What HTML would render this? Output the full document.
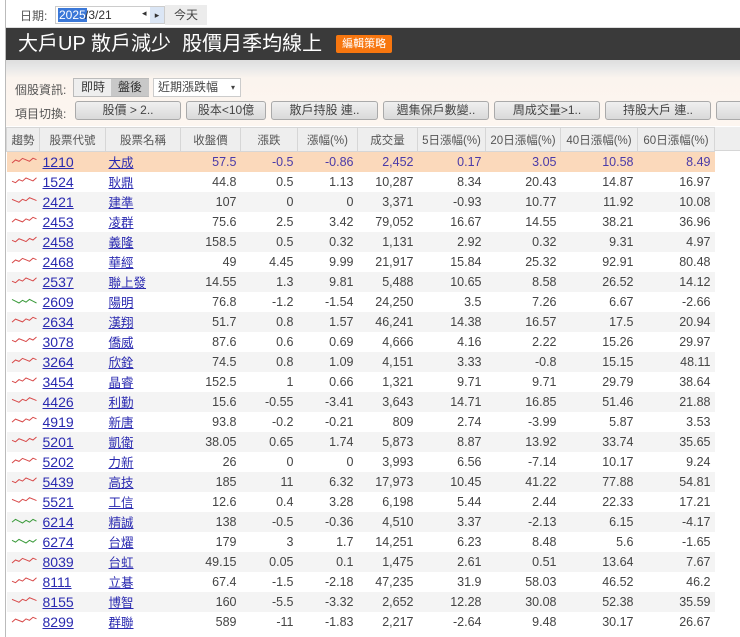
<!DOCTYPE html>
<html><head><meta charset="utf-8"><style>
*{margin:0;padding:0;box-sizing:border-box}
body{width:740px;height:637px;overflow:hidden;background:#fff;font-family:"Liberation Sans","Noto Sans CJK TC",sans-serif;font-size:12px;color:#333;position:relative}
.abs{position:absolute}
.vl{left:5px;top:0;width:1px;height:637px;background:#bbb}
.top{left:6px;top:0;width:734px;height:28px;background:#fff;border-bottom:1px solid #ddd}
.dark{left:6px;top:28px;width:734px;height:32px;background:#3a3a3a;color:#fff;font-size:20px;line-height:32px;padding-left:12px}
.orange{display:inline-block;background:#f7760f;color:#fff;font-size:11px;line-height:18px;padding:0 6px;margin-left:14px;vertical-align:3px;border-radius:2px}
.band{left:6px;top:60px;width:734px;height:66px;background:linear-gradient(#dedede 0,#e8e8e8 8px,#fbf4ee 18px,#fdf6f0 100%)}
.btn{position:absolute;top:101px;height:19px;border:1px solid #aaa;border-radius:3px;background:linear-gradient(#f0f0f0,#d9d9d9);text-align:center;line-height:17px;font-size:12px;color:#444}
table{position:absolute;left:6px;top:127px;border-collapse:collapse;table-layout:fixed}
td,th{height:20px;padding:0 4px;white-space:nowrap;overflow:hidden}
th{height:24px;font-weight:normal;color:#555;background:#eee;border:1px solid #d6d6d6;font-size:11.5px;padding:0 2px}
td{text-align:right;font-size:12.5px;color:#444}
tr:nth-child(odd) td{background:#f4f4f4}
tr.hl td{background:#fbd9bb;color:#4a3aa8}
td.c,td.n{text-align:left;padding-left:3px}
td.c{font-size:14px}
td a{color:#2a2ab0;text-decoration:underline}
td.sp{padding:0 0 0 2px}
</style></head><body>
<div class="abs vl"></div>
<div class="abs top">
 <span class="abs" style="left:14px;top:7px;color:#555">日期:</span>
 <div class="abs" style="left:49px;top:6px;width:110px;height:18px;border:1px solid #ccc;background:#fff">
  <span class="abs" style="left:2px;top:1px;background:#3b78d8;color:#fff;padding:0 1px">2025</span><span class="abs" style="left:29px;top:1px;color:#333">/3/21</span>
  <span class="abs" style="left:86px;top:1px;font-size:9px">◂</span><span class="abs" style="left:94px;top:0;width:14px;height:16px;background:#dbe6f5;font-size:9px;text-align:center;line-height:16px">▸</span>
 </div>
 <div class="abs" style="left:159px;top:5px;width:42px;height:20px;background:#ececec;text-align:center;line-height:20px;color:#444">今天</div>
</div>
<div class="abs dark">大戶UP 散戶減少&nbsp; 股價月季均線上<span class="orange">編輯策略</span></div>
<div class="abs band"></div>
<span class="abs" style="left:15px;top:81px;color:#555">個股資訊:</span>
<div class="abs" style="left:73px;top:78px;width:76px;height:19px;border:1px solid #bbb;background:#eee;font-size:12px;line-height:17px"><span style="padding-left:7px">即時</span><span style="position:absolute;left:37px;top:0;width:38px;height:17px;background:#c8c8c8;text-align:center">盤後</span></div>
<div class="abs" style="left:153px;top:78px;width:88px;height:19px;border:1px solid #ccc;background:#fff;line-height:17px;padding-left:4px;color:#444">近期漲跌幅 <span style="position:absolute;right:5px;font-size:8px">▾</span></div>
<span class="abs" style="left:15px;top:105px;color:#555">項目切換:</span>
<div class="btn" style="left:75px;width:106px">股價 &gt; 2..</div>
<div class="btn" style="left:186px;width:80px">股本&lt;10億</div>
<div class="btn" style="left:271px;width:107px">散戶持股 連..</div>
<div class="btn" style="left:383px;width:106px">週集保戶數變..</div>
<div class="btn" style="left:494px;width:106px">周成交量&gt;1..</div>
<div class="btn" style="left:605px;width:106px">持股大戶 連..</div>
<div class="btn" style="left:716px;width:40px"></div>
<div class="abs" style="left:714px;top:127px;width:26px;height:24px;background:#eee;border-bottom:1px solid #d6d6d6"></div>
<table>
<colgroup><col style="width:33px"><col style="width:66px"><col style="width:75px"><col style="width:60px"><col style="width:57px"><col style="width:60px"><col style="width:60px"><col style="width:68px"><col style="width:75px"><col style="width:77px"><col style="width:77px"></colgroup>
<tr><th>趨勢</th><th>股票代號</th><th>股票名稱</th><th>收盤價</th><th>漲跌</th><th>漲幅(%)</th><th>成交量</th><th>5日漲幅(%)</th><th>20日漲幅(%)</th><th>40日漲幅(%)</th><th>60日漲幅(%)</th></tr>
</table>
<script>
var d=[
["1210","大成","57.5","-0.5","-0.86","2,452","0.17","3.05","10.58","8.49"],
["1524","耿鼎","44.8","0.5","1.13","10,287","8.34","20.43","14.87","16.97"],
["2421","建準","107","0","0","3,371","-0.93","10.77","11.92","10.08"],
["2453","凌群","75.6","2.5","3.42","79,052","16.67","14.55","38.21","36.96"],
["2458","義隆","158.5","0.5","0.32","1,131","2.92","0.32","9.31","4.97"],
["2468","華經","49","4.45","9.99","21,917","15.84","25.32","92.91","80.48"],
["2537","聯上發","14.55","1.3","9.81","5,488","10.65","8.58","26.52","14.12"],
["2609","陽明","76.8","-1.2","-1.54","24,250","3.5","7.26","6.67","-2.66"],
["2634","漢翔","51.7","0.8","1.57","46,241","14.38","16.57","17.5","20.94"],
["3078","僑威","87.6","0.6","0.69","4,666","4.16","2.22","15.26","29.97"],
["3264","欣銓","74.5","0.8","1.09","4,151","3.33","-0.8","15.15","48.11"],
["3454","晶睿","152.5","1","0.66","1,321","9.71","9.71","29.79","38.64"],
["4426","利勤","15.6","-0.55","-3.41","3,643","14.71","16.85","51.46","21.88"],
["4919","新唐","93.8","-0.2","-0.21","809","2.74","-3.99","5.87","3.53"],
["5201","凱衛","38.05","0.65","1.74","5,873","8.87","13.92","33.74","35.65"],
["5202","力新","26","0","0","3,993","6.56","-7.14","10.17","9.24"],
["5439","高技","185","11","6.32","17,973","10.45","41.22","77.88","54.81"],
["5521","工信","12.6","0.4","3.28","6,198","5.44","2.44","22.33","17.21"],
["6214","精誠","138","-0.5","-0.36","4,510","3.37","-2.13","6.15","-4.17"],
["6274","台燿","179","3","1.7","14,251","6.23","8.48","5.6","-1.65"],
["8039","台虹","49.15","0.05","0.1","1,475","2.61","0.51","13.64","7.67"],
["8111","立碁","67.4","-1.5","-2.18","47,235","31.9","58.03","46.52","46.2"],
["8155","博智","160","-5.5","-3.32","2,652","12.28","30.08","52.38","35.59"],
["8299","群聯","589","-11","-1.83","2,217","-2.64","9.48","30.17","26.67"]];
var g={"2609":1,"6214":1,"6274":1};
var t=document.querySelector("table"),h="";
d.forEach(function(r,i){
 var c=g[r[0]]?"#3a9a3a":"#d84a4a";
 var p="";for(var k=0;k<8;k++){p+=(k?" L":"M")+(2+k*3.5)+" "+(10-((i*7+k*13)%5)*0.9-(c=="#d84a4a"?k*0.35:0)).toFixed(1);}
 h+='<tr'+(i==0?' class="hl"':'')+'><td class="sp"><svg width="30" height="14"><path d="'+p+'" fill="none" stroke="'+c+'" stroke-width="1"/></svg></td><td class="c"><a>'+r[0]+'</a></td><td class="n"><a>'+r[1]+'</a></td>';
 for(var j=2;j<10;j++)h+='<td>'+r[j]+'</td>';
 h+='</tr>';
});
t.insertAdjacentHTML("beforeend",h);
</script>
</body></html>
